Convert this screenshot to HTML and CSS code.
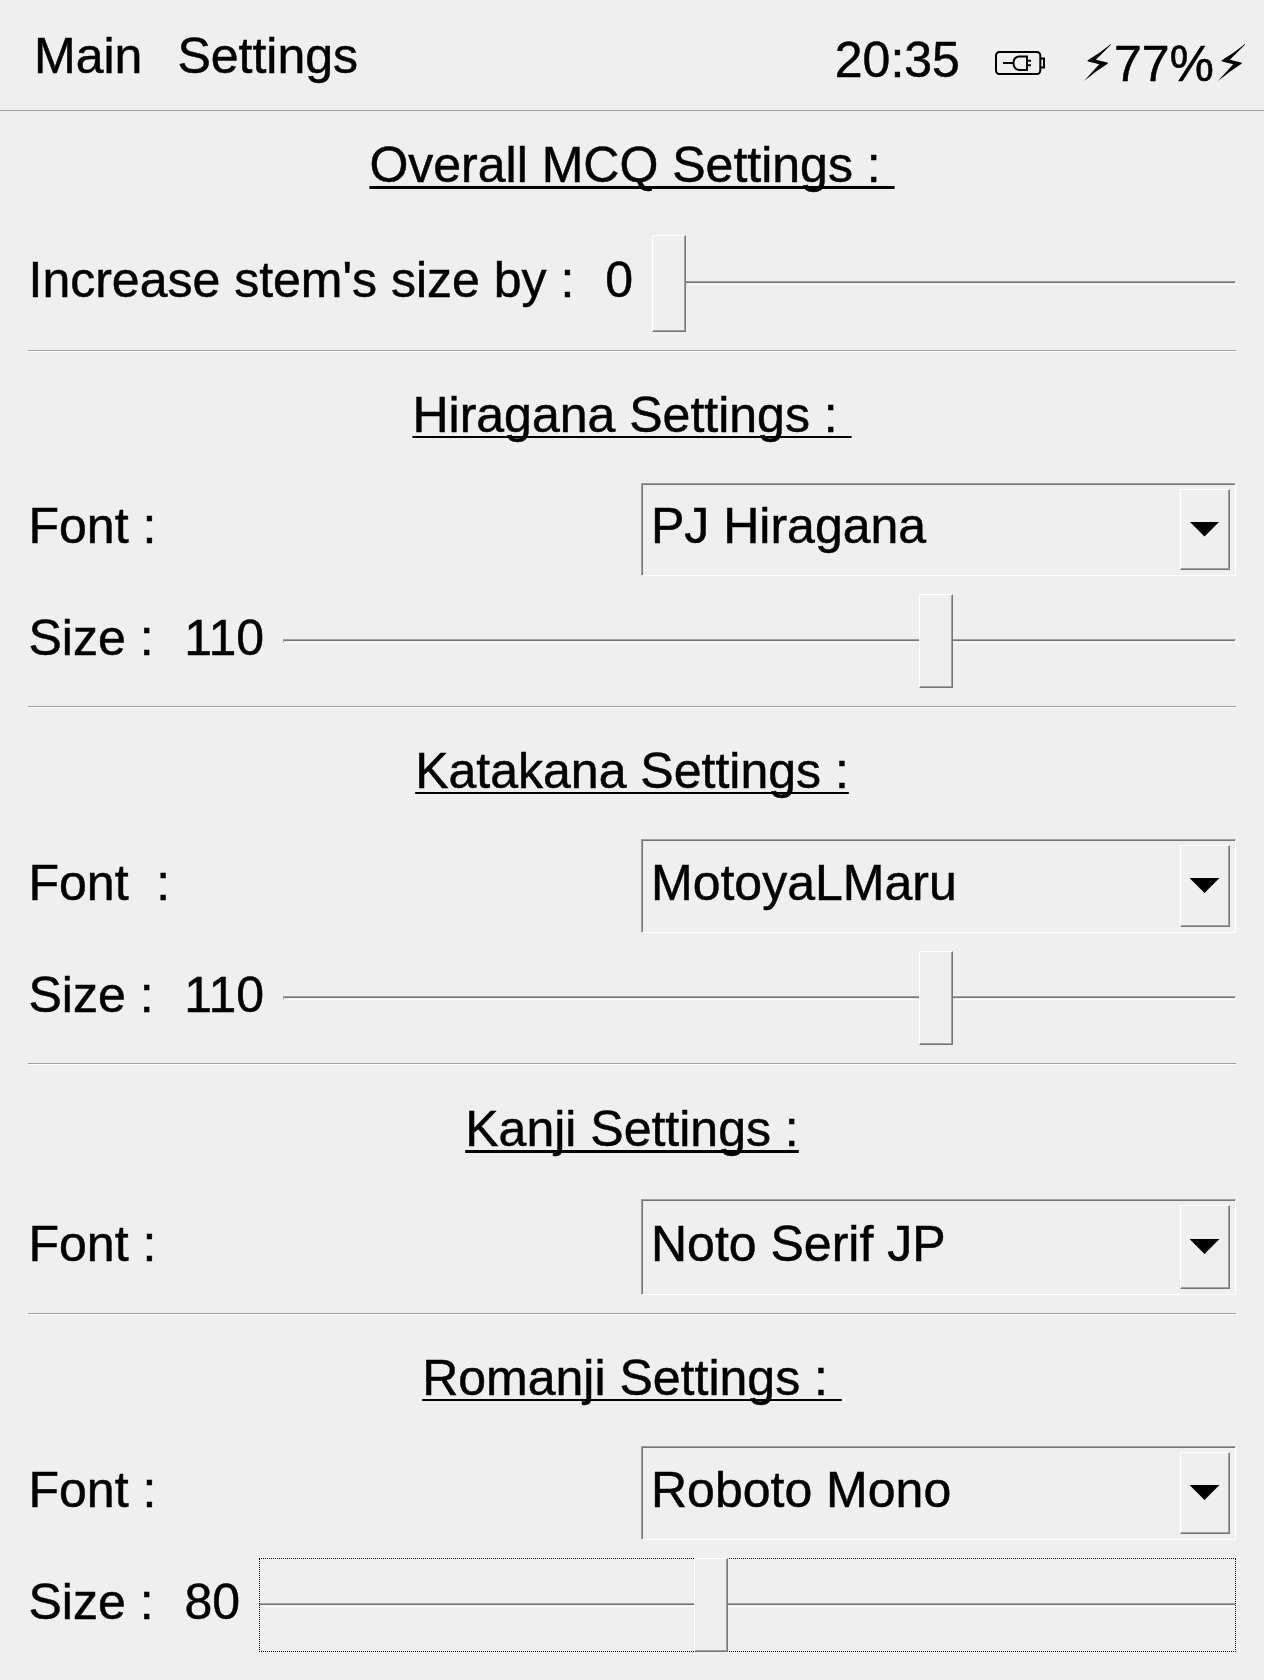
FILE: index.html
```html
<!DOCTYPE html>
<html lang="en">
<head>
<meta charset="utf-8">
<title>Settings</title>
<link rel="stylesheet" href="styles.css">
</head>
<body>
<header class="topbar">
  <nav class="menu"><span>Main</span><span>Settings</span></nav>
  <div class="status">
    <span class="clock">20:35</span>
    <svg class="battery" width="51" height="24" viewBox="0 0 51 24" fill="none" stroke="#000" stroke-width="2">
      <rect x="1" y="1" width="44.3" height="22" rx="3.5"/>
      <path d="M45.5 7.5H49V16.5H45.5M8 12H18M32 5.5H25C20.5 5.5 18.500 8.500 18.500 12S20.500 19 25 19H32ZM32 9.800H36M32 14.200H36"/>
    </svg>
    <span class="charge">
      <svg class="bolt" width="27" height="37" viewBox="0 0 80 110"><path d="M80 0L46 26L11 48Q9 50 12 52L45 60L0 110L36 82L70 59Q73 57 69 55L35 47L80 2Z"/></svg>
      <span class="percent">77%</span>
      <svg class="bolt" width="27" height="37" viewBox="0 0 80 110"><path d="M80 0L46 26L11 48Q9 50 12 52L45 60L0 110L36 82L70 59Q73 57 69 55L35 47L80 2Z"/></svg>
    </span>
  </div>
</header>
<main>
  <section class="group overall">
    <h2 class="thick">Overall MCQ Settings : </h2>
    <div class="row">
      <span class="label">Increase stem's size by :</span><span class="value">0</span>
      <div class="slider wide-thumb"><i class="track"></i><i class="thumb" style="margin-left:0"></i></div>
    </div>
  </section>
  <section class="group hiragana">
    <h2>Hiragana Settings : </h2>
    <div class="row"><span class="label">Font :</span>
      <div class="select"><span class="label">PJ Hiragana</span><b class="drop"></b></div></div>
    <div class="row">
      <span class="label">Size :</span><span class="value">110</span>
      <div class="slider long"><i class="track"></i><i class="thumb" style="margin-left:636px"></i></div>
    </div>
  </section>
  <section class="group">
    <h2>Katakana Settings :</h2>
    <div class="row"><span class="label">Font  :</span>
      <div class="select"><span class="label">MotoyaLMaru</span><b class="drop"></b></div></div>
    <div class="row">
      <span class="label">Size :</span><span class="value">110</span>
      <div class="slider long"><i class="track"></i><i class="thumb" style="margin-left:636px"></i></div>
    </div>
  </section>
  <section class="group kanji">
    <h2 class="thick">Kanji Settings :</h2>
    <div class="row"><span class="label">Font :</span>
      <div class="select"><span class="label">Noto Serif JP</span><b class="drop"></b></div></div>
  </section>
  <section class="group">
    <h2>Romanji Settings : </h2>
    <div class="row"><span class="label">Font :</span>
      <div class="select"><span class="label">Roboto Mono</span><b class="drop"></b></div></div>
    <div class="row">
      <span class="label">Size :</span><span class="value">80</span>
      <div class="slider longest focused"><i class="track"></i><i class="thumb" style="margin-left:435px"></i></div>
    </div>
  </section>
</main>
</body>
</html>
```
FILE: styles.css
```css
* { box-sizing: border-box; }

body {
  margin: 0;
  height: 1680px;
  overflow: hidden;
  background: #efefef;
  color: #000;
  font: 50px/56px "Liberation Sans", Arial, Helvetica, sans-serif;
  -webkit-text-stroke: 0.5px #000;
}

.topbar {
  display: flex;
  justify-content: space-between;
  height: 111px;
  padding: 28px 19px 0 34px;
  border-bottom: 1px solid #a0a0a0;
}

.menu { display: flex; gap: 35px; }
.status { display: flex; align-items: flex-start; }
.clock { padding-top: 4px; }
.battery { margin: 23px 38px 0 35px; }
.charge { display: flex; align-items: flex-start; }
.percent { margin: 8px 4px 0 3px; }
.bolt { margin-top: 16px; }

.group {
  display: flex;
  flex-direction: column;
  gap: 18px;
  padding: 35px 0 19px;
  margin: 0 28px;
  border-bottom: 1px solid #fff;
  box-shadow: inset 0 -1px #a0a0a0;
}
.group:last-child { border: 0; box-shadow: none; }
.overall { padding-top: 26px; }
.kanji { padding-top: 36px; }

h2 {
  align-self: center;
  margin: 0 0 22px;
  font-size: 50px;
  font-weight: 400;
  white-space: pre;
  text-decoration: underline 2px;
  text-underline-offset: 4px;
  text-decoration-skip-ink: none;
}
h2.thick { margin-bottom: 24px; text-decoration-thickness: 3px; }

.row {
  display: flex;
  align-items: center;
  height: 94px;
  white-space: pre;
}
.overall .row { height: 97px; }
.kanji .row { height: 96px; }
.hiragana .row:nth-child(2) { height: 93px; }

.label, .value { padding-bottom: 6px; }
.overall .label, .overall .value,
.hiragana .row:nth-child(2) .label { padding-bottom: 7px; }
.row > .label { padding-left: 0.5px; }
.value { margin: 0 19px 0 auto; }

.select {
  display: flex;
  justify-content: space-between;
  align-items: center;
  align-self: stretch;
  width: 595px;
  margin-left: auto;
  padding: 5px 5px 5px 9px;
  border: 1px solid #fff;
  border-top-color: #a0a0a0;
  border-left-color: #a0a0a0;
  box-shadow: inset 1px 1px #767676;
}

.drop, .thumb {
  border: 1px solid #767676;
  border-top-color: #fff;
  border-left-color: #fff;
  box-shadow: inset -1px -1px #a0a0a0;
}
.drop {
  display: grid;
  place-items: center;
  align-self: stretch;
  width: 50px;
}
.drop::after {
  content: "";
  width: 30px;
  height: 15px;
  margin: 0 1px 1px 0;
  background: #000;
  clip-path: polygon(0 0, 100% 0, 50% 100%);
}

.slider { display: grid; align-self: stretch; width: 584px; }
.slider.long { width: 953px; }
.slider.longest { width: 977px; }
.track, .thumb, .focused::before { grid-area: 1 / 1; }
.track {
  align-self: center;
  height: 4px;
  border: 1px solid #fff;
  border-top-color: #a0a0a0;
  border-left-color: #a0a0a0;
  box-shadow: inset 0 1px #767676;
}
.wide-thumb .track { margin-bottom: 1px; }
.thumb { width: 34px; background: #efefef; z-index: 2; }
.focused::before { content: ""; border: 1px dotted #000; z-index: 1; }
```
